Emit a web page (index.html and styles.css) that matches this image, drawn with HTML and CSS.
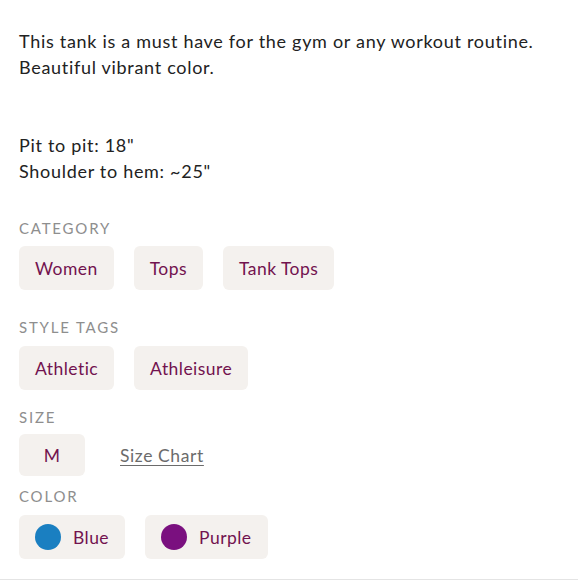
FILE: index.html
```html
<!DOCTYPE html>
<html>
<head>
<meta charset="utf-8">
<link rel="stylesheet" href="styles.css">
</head>
<body>
<div class="page">
  <p class="desc">This tank is a must have for the gym or any workout routine.
Beautiful vibrant color.


Pit to pit: 18"
Shoulder to hem: ~25"</p>

  <section class="sec sec-cat">
    <div class="label">CATEGORY</div>
    <div class="pills">
      <span class="pill">Women</span>
      <span class="pill">Tops</span>
      <span class="pill">Tank Tops</span>
    </div>
  </section>

  <section class="sec sec-style">
    <div class="label">STYLE TAGS</div>
    <div class="pills">
      <span class="pill">Athletic</span>
      <span class="pill">Athleisure</span>
    </div>
  </section>

  <section class="sec sec-size">
    <div class="label">SIZE</div>
    <div class="pills size-row">
      <span class="pill pill-size">M</span>
      <a class="chart" href="#">Size Chart</a>
    </div>
  </section>

  <section class="sec sec-color">
    <div class="label">COLOR</div>
    <div class="pills">
      <span class="pill pill-color"><span class="dot dot-blue"></span>Blue</span>
      <span class="pill pill-color"><span class="dot dot-purple"></span>Purple</span>
    </div>
  </section>
</div>
</body>
</html>
```

FILE: styles.css
```css
html, body {
  margin: 0;
  padding: 0;
  background: #ffffff;
}
body {
  font-family: "Lato", "Noto Sans", sans-serif;
  color: #222222;
}
.page {
  padding: 28px 19px 0 19px;
  height: 551px;
  border-bottom: 1px solid #e4e4e4;
}
.desc {
  margin: 0;
  white-space: pre-line;
  font-size: 18px;
  line-height: 26px;
  letter-spacing: 0.7px;
  color: #222;
}
.sec {
  display: flex;
  flex-direction: column;
}
.sec-cat { margin-top: 34px; }
.sec-style { margin-top: 27px; }
.sec-size { margin-top: 17px; }
.sec-color { margin-top: 10px; }
.label {
  font-size: 15px;
  line-height: 20px;
  letter-spacing: 1.8px;
  color: #8e8e8e;
  margin-bottom: 8px;
}
.sec-style .label { margin-bottom: 9px; }
.sec-size .label { margin-bottom: 7px; }
.sec-color .label { margin-bottom: 9px; }
.pills {
  display: flex;
  align-items: center;
  gap: 20px;
}
.pill {
  display: flex;
  align-items: center;
  height: 44px;
  padding: 0 16px;
  background: #f4f1ee;
  border-radius: 6px;
  font-size: 17.5px;
  letter-spacing: 0.45px;
  color: #72134f;
  box-sizing: border-box;
}
.pill-size {
  height: 42px;
  width: 66px;
  justify-content: center;
  padding: 0;
}
.size-row { gap: 35px; }
.chart {
  font-size: 17.5px;
  letter-spacing: 0.6px;
  color: #6b6b6b;
  text-decoration: underline;
  text-underline-offset: 3px;
}
.pill-color { gap: 12px; }
.dot {
  width: 26px;
  height: 26px;
  border-radius: 50%;
  display: inline-block;
}
.dot-blue { background: #1a7fc1; }
.dot-purple { background: #7a107f; }
```
